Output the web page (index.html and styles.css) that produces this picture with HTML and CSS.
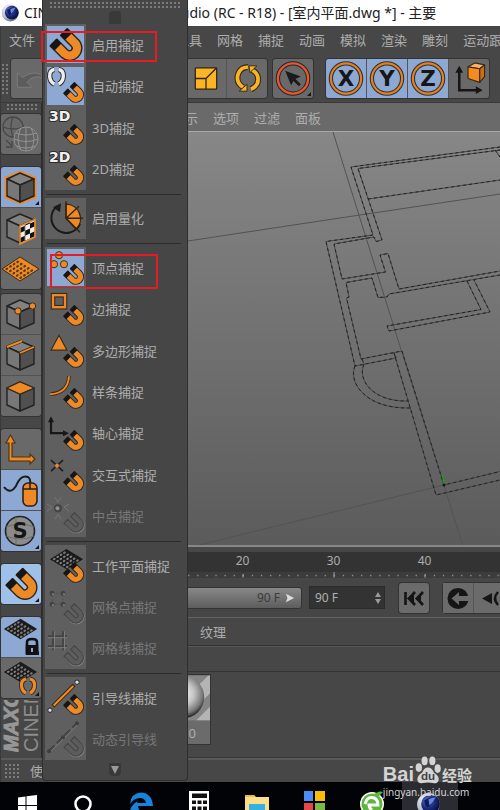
FILE: index.html
```html
<!DOCTYPE html>
<html lang="zh-CN">
<head>
<meta charset="utf-8">
<meta name="viewport" content="width=device-width, initial-scale=1">
<title>CINEMA 4D Studio</title>
<link rel="stylesheet" href="styles.css">
</head>
<body>
<svg class="defs" width="0" height="0" aria-hidden="true">
  <defs>
    <radialGradient id="ball" cx="0.5" cy="0.42" r="0.58"><stop offset="0" stop-color="#f4f4f4"/><stop offset="0.45" stop-color="#c4c4c4"/><stop offset="0.8" stop-color="#777"/><stop offset="1" stop-color="#1c1c1c"/></radialGradient>
    <radialGradient id="blue" cx="0.35" cy="0.35" r="0.7"><stop offset="0" stop-color="#6f8fe0"/><stop offset="0.5" stop-color="#1e2f86"/><stop offset="1" stop-color="#080c30"/></radialGradient>
    <radialGradient id="silver" cx="0.4" cy="0.3" r="0.8"><stop offset="0" stop-color="#fff"/><stop offset="0.6" stop-color="#b9bfcc"/><stop offset="1" stop-color="#4a5068"/></radialGradient>
    <symbol id="mag" viewBox="0 0 24 24">
      <path d="M4.6 10.8L11.700 17.900A4.670 4.670 0 0 0 18.300 11.300L11.200 4.200" fill="none" stroke="#2b2622" stroke-width="7"/>
      <path d="M5.200 11.400L11.700 17.900A4.670 4.670 0 0 0 18.300 11.300L11.800 4.800" fill="none" stroke="#ee8a25" stroke-width="5.200"/>
      <path d="M4.400 10.600L7.600 13.800M11 4L14.200 7.200" fill="none" stroke="#161616" stroke-width="6.200"/>
    </symbol>
    <symbol id="mag-off" viewBox="0 0 24 24">
      <path d="M3.500 13.500L9.700 19.700A7.400 7.400 0 0 0 20.300 9.500L14 3.200" fill="none" stroke="#8a8a8a" stroke-width="1.400" transform="translate(1 1)"/>
      <path d="M3 13L9.700 19.700A7.400 7.400 0 0 0 20.200 9.200L13.500 2.500L9.700 6.300L16.400 13A2 2 0 0 1 13.500 15.900L6.800 9.200Z" fill="#5c5c5c" stroke="#474747" stroke-width="1.200"/>
    </symbol>
    <symbol id="cube" viewBox="0 0 40 40">
      <g stroke="#222" stroke-width="1.4" stroke-linejoin="round"><path d="M6 12L19 6L33 12L19 18Z" fill="#828282"/><path d="M6 12L19 18V35L6 29Z" fill="#777"/><path d="M33 12L19 18V35L33 29Z" fill="#505050"/></g>
    </symbol>
    <symbol id="plane" viewBox="0 0 40 40">
      <path d="M2 14L20 3L38 14L20 25Z" fill="#1b1b1b"/>
      <g stroke="#7d7d7d" stroke-width="2.200" stroke-linecap="round" stroke-dasharray="0.800 3.500" fill="none"><path d="M6.500 14L20 5.600M10 16.200L23.500 7.800M13.500 18.400L27 10M17 20.600L30.500 12.200M20.500 22.600L34 14.200"/></g>
    </symbol>
    <symbol id="c4d" viewBox="0 0 26 26">
      <circle cx="12" cy="13" r="11" fill="url(#silver)"/><circle cx="14" cy="12.500" r="9" fill="url(#blue)"/><path d="M8 9Q14 5 19 6Q17 13 11 16Q8 14 8 9Z" fill="#101a58"/><path d="M12 8Q16 6 19 6Q17 11 13 14Z" fill="#6686dc"/>
    </symbol>
    <symbol id="paren" viewBox="0 0 20 20">
      <g fill="none" stroke="#2c2c2c" stroke-width="5"><path d="M8 3Q3 4 3.500 10Q4 15 8 17M12 3Q17 4 16.500 10Q16 15 12 17"/></g>
      <g fill="none" stroke="currentColor" stroke-width="3.200"><path d="M8 3Q3 4 3.500 10Q4 15 8 17M12 3Q17 4 16.500 10Q16 15 12 17"/></g>
    </symbol>
    <pattern id="check" width="10" height="10" patternUnits="userSpaceOnUse" patternTransform="matrix(1 -0.45 0 1 19 0)"><rect width="10" height="10" fill="#eee"/><rect width="5" height="5" fill="#111"/><rect x="5" y="5" width="5" height="5" fill="#111"/></pattern>
  </defs>
</svg>

<header class="titlebar">
  <svg class="app-icon" viewBox="0 0 26 26"><use href="#c4d"/></svg>
  <h1 class="title"><span class="product">CINEMA 4D</span><span>Studio (RC - R18) - [室内平面.dwg *] - 主要</span></h1>
</header>

<div class="app">
  <nav class="menubar">
    <a href="#">文件</a>
    <div class="menu-rest"><a href="#">工具</a><a href="#">网格</a><a href="#">捕捉</a><a href="#">动画</a><a href="#">模拟</a><a href="#">渲染</a><a href="#">雕刻</a><a href="#">运动跟</a></div>
  </nav>

  <div class="toolbar">
    <span class="grip grip-v"></span>
    <div class="tools undo-tools"><button class="tool" aria-label="撤销"><svg viewBox="0 0 40 40"><path d="M6 14V29H21L16 24Q22 15 34 20Q26 9 11 19Z" fill="#5c5c5c" stroke="#7b7b7b"/></svg></button></div>
    <div class="tools transform-tools">
      <button class="tool" aria-label="缩放"><svg viewBox="0 0 40 40"><g fill="#fbb424" stroke="#2a2418" stroke-width="1.300"><rect x="9" y="9" width="22" height="22" rx="1"/><path d="M9 20H20V31M20 20L31 9" fill="none"/></g></svg></button>
      <button class="tool" aria-label="旋转"><svg viewBox="0 0 40 40"><g fill="none" stroke="#33291a" stroke-width="6"><path d="M16 29Q8 24 11 15Q14 8 21 8.500M24 31Q33 27 31 18Q30 14 25 11"/></g><g fill="none" stroke="#fbb424" stroke-width="3.800"><path d="M16 29Q8 24 11 15Q14 8 21 8.500M24 31Q33 27 31 18Q30 14 25 11"/></g><path d="M20 26V33H12ZM22 7H30L23 14Z" fill="#fbb424" stroke="#33291a"/></svg></button>
    </div>
    <div class="tools select-tools"><button class="tool more" aria-label="选择"><svg viewBox="0 0 40 40"><circle cx="20" cy="20" r="15.500" fill="none" stroke="#252525" stroke-width="4.400"/><circle cx="20" cy="20" r="15.500" fill="none" stroke="#e4582f" stroke-width="2.400"/><path d="M12 12L28 18L22.500 20.500L28 26L26 28L20.500 22.500L18 27Z" fill="#1b1b1b"/></svg></button></div>
    <div class="tools axis-tools">
      <button class="tool on" aria-label="X 轴"><svg viewBox="0 0 40 40"><circle cx="20" cy="20" r="15.500" fill="none" stroke="#3a3028" stroke-width="4.400"/><circle cx="20" cy="20" r="15.500" fill="none" stroke="#dd8228" stroke-width="2.200"/><text class="axis" x="20" y="28" text-anchor="middle">X</text></svg></button>
      <button class="tool on" aria-label="Y 轴"><svg viewBox="0 0 40 40"><circle cx="20" cy="20" r="15.500" fill="none" stroke="#3a3028" stroke-width="4.400"/><circle cx="20" cy="20" r="15.500" fill="none" stroke="#dd8228" stroke-width="2.200"/><text class="axis" x="20" y="28" text-anchor="middle">Y</text></svg></button>
      <button class="tool on" aria-label="Z 轴"><svg viewBox="0 0 40 40"><circle cx="20" cy="20" r="15.500" fill="none" stroke="#3a3028" stroke-width="4.400"/><circle cx="20" cy="20" r="15.500" fill="none" stroke="#dd8228" stroke-width="2.200"/><text class="axis" x="20" y="28" text-anchor="middle">Z</text></svg></button>
      <button class="tool" aria-label="坐标系统"><svg viewBox="0 0 40 40"><path d="M10 11V32H29" fill="none" stroke="#161616" stroke-width="2.600"/><path d="M10 7L14 14H6ZM34 32L27 28V36Z" fill="#161616"/><g stroke="#3a2a18" stroke-width="1.200" stroke-linejoin="round"><path d="M19 8L26 4L36 6L31 10Z" fill="#ffb060"/><path d="M19 8L31 10V24L19 20Z" fill="#f58a1f"/><path d="M31 10L36 6V18L31 24Z" fill="#c96d18"/></g></svg></button>
    </div>
  </div>

  <div class="workspace">
    <aside class="sidebar">
      <span class="grip grip-h"></span>
      <div class="modes"><button class="mode" aria-label="转为可编辑"><svg viewBox="0 0 40 40"><g fill="none" stroke="#484848" stroke-width="1.300"><circle cx="12" cy="13" r="10"/><path d="M2 13Q12 17 22 13M12 3Q8 12 12 23M5 26L11 32M11 27V33H5"/></g><g fill="#626262" stroke="#929292"><circle cx="25" cy="25" r="12"/><path d="M13 25Q25 30 37 25M15 19Q25 23 35 19M16 32Q25 36 34 32M25 13V37M20 14Q14 25 20 36M30 14Q36 25 30 36" fill="none"/></g></svg></button></div>
      <div class="modes gap">
        <button class="mode on more" aria-label="模型"><svg viewBox="0 0 40 40"><path d="M5 11L19 5L34 11V30L19 36L5 30Z" fill="none" stroke="#ee8a25" stroke-width="3"/><use href="#cube" width="40" height="40"/></svg></button>
        <button class="mode" aria-label="纹理"><svg viewBox="0 0 40 40"><use href="#cube" width="40" height="40"/><path d="M19 18L34 11.500V29L19 36Z" fill="url(#check)" stroke="#ee8a25" stroke-width="1.600"/></svg></button>
        <button class="mode" aria-label="工作平面"><svg viewBox="0 0 40 40"><path d="M1 20L19 8L38 20L19 32Z" fill="#ee8a25" stroke="#3a2a18"/><g stroke="#5a3a10" stroke-width="2.200" stroke-linecap="round" stroke-dasharray="0.800 3.500"><path d="M5.500 20L19.500 11M9 22.200L23 13.200M12.500 24.400L26.500 15.400M16 26.600L30 17.600M19.500 28.800L33.500 19.800"/></g></svg></button>
      </div>
      <div class="modes">
        <button class="mode" aria-label="点"><svg viewBox="0 0 40 40"><use href="#cube" width="40" height="40"/><g fill="#ee8a25" stroke="#3a2a18"><circle cx="17" cy="17" r="3.200"/><circle cx="31.500" cy="12" r="3.200"/></g></svg></button>
        <button class="mode" aria-label="边"><svg viewBox="0 0 40 40"><use href="#cube" width="40" height="40"/><path d="M6 12L21 6M19 18L33 12" stroke="#3a2a18" stroke-width="3.400"/><path d="M6 12L21 6M19 18L33 12" stroke="#ee8a25" stroke-width="1.900"/></svg></button>
        <button class="mode" aria-label="多边形"><svg viewBox="0 0 40 40"><use href="#cube" width="40" height="40"/><path d="M6 12L19 6L33 12L19 18Z" fill="#ee8a25" stroke="#3a2a18"/></svg></button>
      </div>
      <div class="modes gap">
        <button class="mode" aria-label="启用轴心"><svg viewBox="0 0 40 40"><path d="M8 14V32H29V35L34 30L29 25V28H11V14H14L9.500 6L5 14Z" fill="#ee8a25" stroke="#4c300f" stroke-width="1.100"/></svg></button>
        <button class="mode on" aria-label="微调"><svg viewBox="0 0 40 40"><path d="M3 17Q9 25 15 16Q20 4 27 7Q30 9 29 14" fill="none" stroke="#1b1b1b" stroke-width="2"/><rect x="22" y="13" width="14" height="23" rx="5" fill="#ee8a25" stroke="#2b2018" stroke-width="1.600"/><path d="M22 19H36M29 13V19" stroke="#2b2018" stroke-width="1.600"/></svg></button>
        <button class="mode on more" aria-label="视窗独显"><svg viewBox="0 0 40 40"><circle cx="19" cy="20" r="14.500" fill="#8c8c8c" stroke="#222" stroke-width="1.600"/><path d="M5 16Q19 10 33 16M5 25Q19 31 33 25M15 6V34" stroke="#6e6e6e" fill="none"/><text class="solo" x="19" y="27" text-anchor="middle">S</text></svg></button>
      </div>
      <div class="modes gap"><button class="mode bright more" aria-label="捕捉"><svg viewBox="0 0 40 40"><use href="#mag" x="1" y="1" width="37" height="37"/></svg></button></div>
      <div class="modes gap">
        <button class="mode on more" aria-label="锁定工作平面"><svg viewBox="0 0 40 40"><use href="#plane" x="1" y="-1" width="37" height="37"/><path d="M26 29V25Q26 22 31 22Q36 22 36 25V29" fill="none" stroke="#111" stroke-width="2.600"/><rect x="24.500" y="28" width="13" height="10" rx="1" fill="#111"/><rect x="30" y="31" width="2" height="4" fill="#8ea9d3"/></svg></button>
        <button class="mode more" aria-label="自动工作平面"><svg class="orange" viewBox="0 0 40 40"><use href="#plane" x="1" y="1" width="37" height="37"/><use href="#paren" x="17" y="18" width="20" height="20"/></svg></button>
      </div>
      <div class="brand"><strong>MAXON</strong><span>CINEMA</span></div>
    </aside>

    <main class="stage">
      <nav class="view-menu"><a href="#">显示</a><a href="#">选项</a><a href="#">过滤</a><a href="#">面板</a></nav>
      <div class="viewport">
        <svg viewBox="42 132 458 413" preserveAspectRatio="xMinYMin slice" role="img" aria-label="室内平面">
          <g fill="none" stroke="#535353" stroke-width="1"><path d="M333 132L398 340L463 546M188 241L300 224L500 194M195 546L444 485"/></g>
          <g fill="none" stroke="#484848" stroke-width="1"><path id="walls" d="M500 147L351 167L373 235L326 241.500L355 366L396 358L394 353L436 495L500 480M500 150L358 168.500L382 240L376 241.500L374 237L334 244L342 279L385.500 272L380 255L388 253.500L399 289L500 271M500 275L389 294L387 297L378 297.500L372 278L346 282.500L349 297L346.500 298L361 359L402 351L444 485L500 471.500M368 199L500 180M495 150L500 157M467 281L481 309.500L387 326L389 331L490 312L474 280M355 366C348 382 365 409 410 408M362 359L364 364C357 379 372 402 408 401"/></g>
          <use href="#walls" fill="none" stroke="#222" stroke-width="1" stroke-dasharray="3 3"/>
          <path d="M442.500 474L444 484" stroke="#18a018" stroke-width="1.500"/><circle cx="444" cy="485" r="1.500" fill="#151515"/>
        </svg>
      </div>
      <div class="timeline">
        <div class="frames"><span>20</span><span>30</span><span>40</span></div>
        <svg class="ticks" viewBox="0 0 458 7" preserveAspectRatio="xMinYMin slice"><path d="M100.600 3.500H460" stroke="#8d8d8d" stroke-width="1.300" stroke-dasharray="1.300 7.800"/><path d="M201 2V5.500M292 0V5.500M383 2V5.500" stroke="#a5a5a5"/></svg>
      </div>
      <div class="transport">
        <div class="range"><span>90 F</span><svg viewBox="0 0 12 12"><path d="M1 1L11 6L1 11L3 6Z" fill="#ddd"/></svg></div>
        <label class="frame-field"><input type="text" value="90 F" aria-label="结束帧"><svg viewBox="0 0 8 12"><path d="M4 0L7 5H1ZM4 12L1 7H7Z" fill="#999"/></svg></label>
        <button class="play first" aria-label="转到开始"><svg viewBox="0 0 30 30"><path d="M6.500 9V22" stroke="#151515" stroke-width="2.600"/><path d="M16 9L10 15.500L16 22M24 9L18 15.500L24 22" fill="none" stroke="#151515" stroke-width="2.600"/><path d="M8 15.500L15 10V21ZM16 15.500L22 10V21Z" fill="#151515"/></svg></button>
        <div class="play-group">
          <button class="play" aria-label="转到上一关键帧"><svg viewBox="0 0 30 30"><circle cx="15" cy="15.500" r="10.500" fill="#151515"/><path d="M8.500 15.500L16 9V13H27V18H16V22Z" fill="#6b6b6b"/></svg></button>
          <button class="play" aria-label="转到上一帧"><svg viewBox="0 0 30 30"><path d="M8 15.500L18 10V21Z" fill="#151515"/><path d="M24 9Q18 15.500 24 22" fill="none" stroke="#151515" stroke-width="2.500"/></svg></button>
        </div>
      </div>
      <nav class="material-menu"><a href="#">纹理</a></nav>
      <div class="material-strip"></div>
      <section class="materials">
        <figure class="material"><svg viewBox="0 0 70 46"><rect width="70" height="46" fill="#858585"/><path d="M70 0V18L42 46H22L68 0Z" fill="#b4b4b4"/><path d="M70 32V46H56Z" fill="#b4b4b4"/><circle cx="42" cy="22" r="22" fill="url(#ball)"/></svg><figcaption>材质.0</figcaption></figure>
      </section>
    </main>
  </div>

  <footer class="status"><span class="grip grip-s"></span><span class="status-text">使用</span></footer>
</div>

<div class="taskbar">
  <button aria-label="开始"><svg viewBox="0 0 30 28"><path d="M6 15.500L13.500 14.500V23H6ZM14.500 14.300L25 13V23H14.500ZM6 24H13.500V28H6ZM14.500 24H25V28H14.500Z" fill="#fff"/></svg></button>
  <button aria-label="搜索"><svg viewBox="0 0 30 28"><circle cx="15" cy="22" r="7.500" fill="none" stroke="#fff" stroke-width="2.600"/></svg></button>
  <button aria-label="Edge"><svg viewBox="0 0 30 28"><path d="M4 22Q5 11 15 10.500Q26 11 27 24H12Q12 28 15 29H4Q5 22 14 18Q11 19 11 21H20Q19 16 14 16Q8 16 4 22Z" fill="#1683dc"/></svg></button>
  <button aria-label="计算器"><svg viewBox="0 0 30 28"><path d="M5 9H25V28H5Z" fill="#fff"/><path d="M8 11.500H23V16H8ZM8 18.500H12V22H8ZM13.500 18.500H17.500V22H13.500ZM19 18.500H23V22H19ZM8 24.500H12V28H8ZM13.500 24.500H17.500V28H13.500ZM19 24.500H23V28H19Z" fill="#111"/></svg></button>
  <button aria-label="文件夹"><svg viewBox="0 0 30 28"><path d="M3 13H12L14 15H27V28H3Z" fill="#fbdf8a"/><path d="M3 13H12L13 15H3Z" fill="#eebc3c"/><path d="M7 22H23V28H7Z" fill="#35b0e6"/></svg></button>
  <button aria-label="应用"><svg viewBox="0 0 30 28"><path d="M4 9H13V19H4Z" fill="#4a8df8"/><path d="M15 9H25V19H15Z" fill="#fbbc05"/><path d="M4 21H13V28H4Z" fill="#e84545"/><path d="M15 21H25V28H15Z" fill="#7cbb42"/></svg></button>
  <button aria-label="浏览器"><svg viewBox="0 0 30 28"><circle cx="14" cy="22" r="12" fill="#fff"/><circle cx="14" cy="22" r="10.500" fill="#5cb83c"/><path d="M7 22Q9 15 14 15.500Q20 16 20 23H11Q11 26 14 28" fill="none" stroke="#fff" stroke-width="3"/><path d="M13 14Q21 8 25 10Q23 12 21 14" fill="#5cb83c"/></svg></button>
  <button class="current" aria-label="CINEMA 4D"><svg viewBox="0 0 30 28"><use href="#c4d" x="1" y="9" width="27" height="27"/></svg></button>
</div>

<aside class="snap-panel">
  <span class="grip grip-top"></span>
  <span class="tab tab-up"></span>
  <ul class="snap-list">
    <li class="snap on marked"><svg viewBox="0 0 41 41"><use href="#mag" x="1" y="1" width="38" height="38"/></svg><a href="#">启用捕捉</a></li>
    <li class="snap on"><svg class="white" viewBox="0 0 41 41"><use href="#paren" x="1" y="1" width="21" height="21"/><use href="#mag" x="16" y="15" width="24" height="24"/></svg><a href="#">自动捕捉</a></li>
    <li class="snap"><svg viewBox="0 0 41 41"><text class="dim" x="4" y="14">3D</text><use href="#mag" x="16" y="15" width="24" height="24"/></svg><a href="#">3D捕捉</a></li>
    <li class="snap"><svg viewBox="0 0 41 41"><text class="dim" x="4" y="14">2D</text><use href="#mag" x="16" y="15" width="24" height="24"/></svg><a href="#">2D捕捉</a></li>
    <li class="rule"></li>
    <li class="snap"><svg viewBox="0 0 41 41"><path d="M12 8A15 15 0 1 0 35 26" fill="none" stroke="#1a1a1a" stroke-width="2"/><path d="M16 5L15 14L8 9Z" fill="#1a1a1a"/><path d="M21 6A14.500 14.500 0 0 1 31 31L21 20Z" fill="#ee8a25" stroke="#33240f" stroke-width="1.300"/><path d="M21 3V20L35 34M21 20L34 8M21 20H38" fill="none" stroke="#33240f" stroke-width="1.400"/></svg><a href="#">启用量化</a></li>
    <li class="rule"></li>
    <li class="snap on marked wide-mark"><svg viewBox="0 0 41 41"><g fill="#ee8a25" stroke="#3d3021"><circle cx="14" cy="8" r="3.600"/><circle cx="9" cy="17" r="3.600"/><circle cx="19" cy="17" r="3.600"/></g><use href="#mag" x="16" y="15" width="24" height="24"/></svg><a href="#">顶点捕捉</a></li>
    <li class="snap"><svg viewBox="0 0 41 41"><rect x="8" y="7" width="12" height="12" fill="none" stroke="#32281c" stroke-width="4.600"/><rect x="8" y="7" width="12" height="12" fill="none" stroke="#ee8a25" stroke-width="2.400"/><use href="#mag" x="16" y="15" width="24" height="24"/></svg><a href="#">边捕捉</a></li>
    <li class="snap"><svg viewBox="0 0 41 41"><path d="M14 5L22 20H6Z" fill="#ee8a25" stroke="#3a2c1c" stroke-width="1.200"/><use href="#mag" x="16" y="15" width="24" height="24"/></svg><a href="#">多边形捕捉</a></li>
    <li class="snap"><svg viewBox="0 0 41 41"><path d="M5 23Q23 22 24 5" fill="none" stroke="#3a2a18" stroke-width="3.600"/><path d="M5 23Q23 22 24 5" fill="none" stroke="#ee8a25" stroke-width="1.900"/><use href="#mag" x="16" y="15" width="24" height="24"/></svg><a href="#">样条捕捉</a></li>
    <li class="snap"><svg viewBox="0 0 41 41"><path d="M6 6V20H20" fill="none" stroke="#181818" stroke-width="2.200"/><path d="M6 3L9 9H3ZM24 20L18 17V23Z" fill="#181818"/><use href="#mag" x="16" y="15" width="24" height="24"/></svg><a href="#">轴心捕捉</a></li>
    <li class="snap"><svg viewBox="0 0 41 41"><path d="M6 6L18 17M18 6L6 17" stroke="#1d1d1d" stroke-width="1.600"/><circle cx="12" cy="11.500" r="2" fill="#ee8a25"/><use href="#mag" x="16" y="15" width="24" height="24"/></svg><a href="#">交互式捕捉</a></li>
    <li class="snap off"><svg viewBox="0 0 41 41"><g fill="none" stroke="#777"><path d="M10 2L13 7L16 2M10 24L13 19L16 24M2 9L7 12L2 16M24 9L19 12L24 16"/></g><circle cx="13" cy="13" r="4" fill="#444"/><circle cx="12.500" cy="13" r="2" fill="#909090"/><use href="#mag-off" x="16" y="15" width="24" height="24"/></svg><a href="#">中点捕捉</a></li>
    <li class="rule"></li>
    <li class="snap"><svg viewBox="0 0 41 41"><use href="#plane" x="3" y="1" width="37" height="37"/><use href="#mag" x="16" y="15" width="24" height="24"/></svg><a href="#">工作平面捕捉</a></li>
    <li class="snap off"><svg viewBox="0 0 41 41"><path d="M7 7H18V18H7Z" fill="none" stroke="#505050" stroke-dasharray="2 2"/><g fill="#444"><circle cx="7" cy="7" r="2.500"/><circle cx="18" cy="7" r="2.500"/><circle cx="7" cy="18" r="2.500"/><circle cx="18" cy="18" r="2.500"/></g><g fill="#858585"><circle cx="8" cy="8" r="1"/><circle cx="19" cy="8" r="1"/><circle cx="8" cy="19" r="1"/><circle cx="19" cy="19" r="1"/></g><use href="#mag-off" x="16" y="15" width="24" height="24"/></svg><a href="#">网格点捕捉</a></li>
    <li class="snap off"><svg viewBox="0 0 41 41"><path d="M8 3V22M18 3V22M3 8H22M3 18H22" stroke="#454545" stroke-width="2"/><path d="M9.500 3V22M19.500 3V22M3 9.500H22M3 19.500H22" stroke="#7c7c7c"/><use href="#mag-off" x="16" y="15" width="24" height="24"/></svg><a href="#">网格线捕捉</a></li>
    <li class="rule"></li>
    <li class="snap"><svg viewBox="0 0 41 41"><path d="M8 29L29 8" stroke="#33240f" stroke-width="4"/><path d="M8.700 28.300L28.300 8.700" stroke="#ee8a25" stroke-width="2.200"/><g fill="#ddd" stroke="#222"><circle cx="32" cy="5" r="2.200"/><circle cx="5" cy="33" r="2.200"/></g><use href="#mag" x="16" y="15" width="24" height="24"/></svg><a href="#">引导线捕捉</a></li>
    <li class="snap off"><svg viewBox="0 0 41 41"><path d="M4 32L32 4" stroke="#454545" stroke-width="2.400" stroke-dasharray="8 3"/><path d="M5 33L33 5" stroke="#7c7c7c"/><g fill="#3e3e3e"><circle cx="4" cy="32" r="2"/><circle cx="18" cy="18" r="2"/><circle cx="32" cy="4" r="2"/></g><use href="#mag-off" x="16" y="15" width="24" height="24"/></svg><a href="#">动态引导线</a></li>
  </ul>
  <button class="tab tab-down" aria-label="更多"><svg viewBox="0 0 12 12"><path d="M2 2H10L6 10Z" fill="#9a9a9a"/></svg></button>
</aside>

<div class="watermark">
  <div class="mark-top"><b>Bai</b><svg viewBox="0 0 28 30"><g fill="currentColor"><ellipse cx="4.500" cy="12" rx="3.300" ry="4.500"/><ellipse cx="10.500" cy="5" rx="3.200" ry="4.500"/><ellipse cx="18.500" cy="5" rx="3.200" ry="4.500"/><ellipse cx="24" cy="13" rx="3.200" ry="4.500"/><path d="M14 12Q18 12 20 17Q26 21 25 25Q24 29 19 28Q14 27 9 28Q3 29 3 24Q3 20 8 17Q10 12 14 12Z"/></g><text class="du" x="14" y="25" text-anchor="middle">du</text></svg><b class="jy">经验</b></div>
  <div class="mark-url">jingyan.baidu.com</div>
</div>
</body>
</html>
```
FILE: styles.css
```css
*, *::before, *::after { box-sizing: border-box; }

body {
  margin: 0;
  height: 100vh;
  position: relative;
  display: flex;
  flex-direction: column;
  overflow: hidden;
  background: #474747;
  color: #adadad;
  font: 13px/20px "Noto Sans", "Noto Sans CJK SC", sans-serif;
}

a { color: inherit; text-decoration: none; white-space: nowrap; }
button { margin: 0; padding: 0; border: 0; background: none; font: inherit; color: inherit; }
svg { display: block; }
.defs { position: absolute; }

.titlebar { display: flex; align-items: center; height: 26px; flex: none; background: #fff; }
.app-icon { width: 20px; height: 20px; margin: 0 3px 0 1px; }
.title {
  display: flex;
  margin: 0;
  color: #222;
  font: 400 14px/26px "Noto Sans", "Noto Sans CJK SC", sans-serif;
  white-space: nowrap;
}
.product { width: 144px; }

.app { flex: 1; min-height: 0; display: flex; flex-direction: column; border-left: 1px solid #3a3a3a; }

.menubar { display: flex; flex: none; height: 29px; padding: 4px 0 0 8px; }
.menu-rest { display: flex; gap: 15px; margin-left: 141px; }

.toolbar { display: flex; flex: none; align-items: center; height: 48px; border-bottom: 1px solid #3a3a3a; }
.grip {
  flex: none;
  background-image: radial-gradient(circle, #7c7c7c 0 1px, transparent 1px);
  background-size: 4px 4px;
}
.grip-v { width: 8px; height: 32px; }
.tools { display: flex; gap: 1px; background: #555; border-radius: 3px; box-shadow: 0 0 0 1px #333; overflow: hidden; }
.undo-tools { margin-left: 2px; }
.transform-tools { margin-left: 135px; }
.select-tools { margin-left: 6px; }
.axis-tools { margin-left: 13px; }
.tool, .mode { position: relative; width: 40px; height: 39px; flex: none; background: #696969; }
.tool svg, .mode svg { width: 100%; height: 100%; }
.tool.on, .mode.on { background: #8da8d3; }
.mode.bright { background: #9fc0e8; }
.more::after {
  content: "";
  position: absolute;
  right: 2px;
  bottom: 2px;
  border: 2px solid transparent;
  border-right-color: #151515;
  border-bottom-color: #151515;
}
.axis { fill: #171717; font: 700 22px "DejaVu Sans", sans-serif; }

.workspace { flex: 1; min-height: 0; display: flex; }
.sidebar { display: flex; flex-direction: column; flex: none; width: 41px; border-right: 1px solid #2e2e2e; }
.grip-h { width: 32px; height: 8px; margin: 0 0 3px 5px; }
.modes { display: grid; flex: none; gap: 1px; margin-top: 5px; background: #525252; border-radius: 3px; box-shadow: 0 0 0 1px #333; overflow: hidden; }
.grip-h + .modes { margin-top: 0; }
.modes.gap { margin-top: 13px; }
.mode { width: 100%; height: 40px; }
.orange { color: #ee8a25; }
.white { color: #eee; }
.solo { fill: #151515; font: 900 21px "DejaVu Sans", sans-serif; }
.brand {
  flex: 1;
  min-height: 0;
  display: flex;
  flex-direction: column;
  margin: 2px 0 6px;
  overflow: hidden;
  writing-mode: vertical-rl;
  transform: rotate(180deg);
  color: #8d8d8d;
  font: 20px/20px "Liberation Sans", sans-serif;
  white-space: nowrap;
}
.brand strong { font-style: italic; color: #979797; -webkit-text-stroke: 1px #979797; }

.stage { flex: 1; min-width: 0; display: flex; flex-direction: column; }
.view-menu { display: flex; flex: none; gap: 15px; height: 28px; padding: 5px 0 0 130px; background: #6a6a6a; }
.viewport {
  flex: 1;
  min-height: 0;
  border-top: 1px solid #a8a8a8;
  border-bottom: 2px solid #888;
  background: linear-gradient(#878787, #5b5b5b);
}
.viewport svg { width: 100%; height: 100%; }

.timeline { flex: none; height: 32px; margin-top: 5px; background: #3c3c3c; }
.frames {
  display: grid;
  grid-template-columns: repeat(3, 91px);
  height: 20px;
  padding-left: 155px;
  background: #333;
  font-size: 12px;
  line-height: 18px;
  text-align: center;
}
.ticks { width: 100%; height: 7px; }

.transport { display: flex; flex: none; align-items: center; height: 40px; border-bottom: 1px solid #636363; margin-top: -6px; background: #464646; font-size: 12px; }
.range {
  display: flex;
  flex: none;
  align-items: center;
  justify-content: flex-end;
  gap: 5px;
  width: 260px;
  height: 22px;
  padding-right: 6px;
  border: 1px solid #333;
  border-radius: 3px;
  background: linear-gradient(#888, #5d5d5d);
  color: #3b3b3b;
}
.range svg { width: 10px; height: 10px; }
.frame-field { display: flex; flex: none; align-items: center; width: 76px; height: 23px; margin-left: 7px; padding-right: 2px; border: 1px solid #2b2b2b; background: #333; }
.frame-field input { flex: 1; min-width: 0; padding: 0 0 0 5px; border: 0; background: none; color: #b0b0b0; font: inherit; }
.frame-field svg { width: 8px; height: 12px; }
.play { width: 30px; height: 30px; flex: none; background: #6b6b6b; }
.first { margin-left: 14px; border-radius: 3px; box-shadow: 0 0 0 1px #333; }
.play-group { display: flex; flex: none; gap: 1px; margin-left: 14px; background: #555; border-radius: 3px; box-shadow: 0 0 0 1px #333; }

.material-menu { flex: none; height: 28px; padding: 4px 0 0 158px; border-bottom: 1px solid #333; }
.material-strip { flex: none; height: 26px; border-top: 1px solid #585858; border-bottom: 1px solid #333; }
.materials { flex: none; height: 86px; padding: 2px 0 0 99px; border-bottom: 1px solid #393939; }
.material { width: 70px; margin: 0; border: 1px solid #333; background: #6b6b6b; }
.material svg { width: 100%; height: 46px; }
.material figcaption { height: 23px; padding-right: 14px; text-align: right; line-height: 24px; }

.status { display: flex; flex: none; align-items: center; height: 24px; border-top: 2px solid #595959; }
.grip-s { width: 16px; height: 16px; margin-left: 3px; }
.status-text { margin-left: 10px; }

.taskbar { display: flex; flex: none; height: 28px; background: #020306; overflow: hidden; }
.taskbar button { flex: none; width: 58px; display: grid; justify-items: center; }
.taskbar button:first-child { width: 54px; }
.taskbar svg { width: 30px; height: 28px; }
.taskbar .current { width: 56px; background: #2b2c31; }

.snap-panel {
  position: absolute;
  top: 0;
  bottom: 29px;
  left: 42px;
  width: 146px;
  display: flex;
  flex-direction: column;
  align-items: center;
  border: 1px solid #2f2f2f;
  border-top: 0;
  border-radius: 0 0 4px 4px;
  background: #464646;
}
.grip-top { width: 132px; height: 8px; margin: 1px 0 2px; }
.tab { flex: none; width: 12px; height: 13px; border-radius: 0 0 4px 4px; background: #393939; }
.tab-up { border-radius: 4px 4px 0 0; }
.tab-down { margin: 3px 0 4px; }
.snap-list { flex: 1; width: 100%; min-height: 0; display: flex; flex-direction: column; margin: 0; padding: 0 0 0 2px; list-style: none; }
.snap { position: relative; flex: 1; min-height: 0; display: flex; align-items: center; }
.snap svg { flex: none; width: 41px; height: 100%; margin-right: 6px; background: #5f5f5f; }
.snap.on svg { background: #8da8d3; box-shadow: inset 0 0 0 2px #5f5f5f; }
.snap.off { color: #777; }
.rule { flex: none; height: 8px; padding-right: 6px; }
.rule::after { content: ""; display: block; height: 1px; margin: 4px 0 0 2px; background: #2c2c2c; }
.marked::after {
  content: "";
  position: absolute;
  left: -4px;
  top: 7px;
  width: 116px;
  height: 31px;
  border: 2px solid #e51c25;
}
.wide-mark::after { left: 5px; width: 108px; height: 35px; }
.dim { fill: #f0f0f0; stroke: #2b2b2b; stroke-width: 2px; paint-order: stroke; font: 700 14px "DejaVu Sans", sans-serif; }

.watermark { position: absolute; right: 28px; bottom: 11px; color: #d4d4d4; }
.mark-top { display: flex; align-items: flex-end; height: 28px; font: 700 20px/22px "Liberation Sans", sans-serif; }
.mark-top svg { width: 28px; height: 29px; }
.mark-top .jy { font: 700 15px/21px "Noto Sans CJK SC", sans-serif; }
.du { fill: #444; font: 700 12px "Liberation Sans", sans-serif; }
.mark-url { font: 10px/14px "Noto Sans", sans-serif; }
```
